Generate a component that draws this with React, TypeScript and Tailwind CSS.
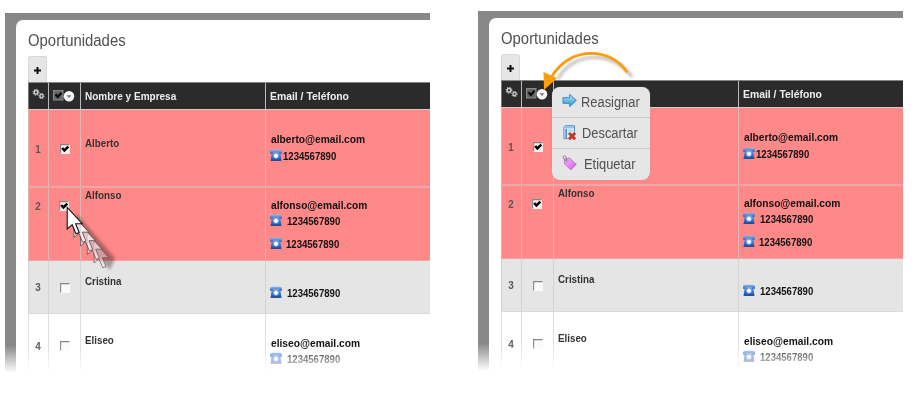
import type { ReactNode } from "react";

function PhoneIcon() {
  return (
    <svg viewBox="0 0 12 12" className="mb-[2px] h-3 w-3 shrink-0">
      <defs>
        <linearGradient id="phoneBody" x1="0" y1="0" x2="0" y2="1">
          <stop offset="0" stopColor="#6d9fe2" />
          <stop offset="1" stopColor="#1b4dad" />
        </linearGradient>
        <linearGradient id="phoneHandset" x1="0" y1="0" x2="0" y2="1">
          <stop offset="0" stopColor="#8db8ee" />
          <stop offset="1" stopColor="#2f68be" />
        </linearGradient>
      </defs>
      <path d="M1.6 3.4h8.8l1 8.3H.6z" fill="url(#phoneBody)" />
      <path d="M0 4.7V2.2Q.3.7 2.2.7h7.6Q11.7.7 12 2.2v2.5H9.2V3.5H2.8v1.2z" fill="url(#phoneHandset)" />
      <circle cx="6" cy="6.9" r="2.1" fill="#fff" />
      <circle cx="6" cy="6.9" r="2.5" fill="none" stroke="#a6c6ee" strokeWidth=".6" />
      <path d="M.7 11.3h10.6" stroke="#173f8e" strokeWidth=".8" />
    </svg>
  );
}

function Checkbox({ checked }: { checked?: boolean }) {
  return (
    <svg viewBox="0 0 10 10" className="h-[10px] w-[10px]">
      <rect width="10" height="10" fill={checked ? "#f4efec" : "#fafafa"} />
      <path d="M.6 9.5V.6h8.9" fill="none" stroke="#858585" strokeWidth="1.1" />
      {checked && <path d="M2.2 4 4.4 6.4 8.3 2.7" fill="none" stroke="#000" strokeWidth="2.5" />}
    </svg>
  );
}

function Gear({ x, y, s }: { x: number; y: number; s: number }) {
  return (
    <g transform={`translate(${x} ${y}) scale(${s})`}>
      <circle r="1.9" fill="none" stroke="#d0d0d0" strokeWidth="1.5" />
      <circle r="3" fill="none" stroke="#c4c4c4" strokeWidth="1.3" strokeDasharray="1.18 1.18" />
    </g>
  );
}

type Row = {
  name: string;
  row: string;
  cell: string;
  numPad: string;
  checkPad: string;
  namePad: string;
  contactPad: string;
  checked?: boolean;
  email?: string;
  phones: { pad: string; gap: string }[];
};

const rows: Row[] = [
  {
    name: "Alberto",
    row: "h-[78px] bg-[#ff8888] border-b-2 border-[#eca8a8]",
    cell: "border-l border-[#e2b4b4]",
    numPad: "pt-8",
    checkPad: "pt-[34px] pl-[11px]",
    namePad: "pt-[26px]",
    contactPad: "pt-[22px]",
    checked: true,
    email: "alberto@email.com",
    phones: [{ pad: "mt-[3px]", gap: "gap-[1px]" }],
  },
  {
    name: "Alfonso",
    row: "h-[73px] bg-[#ff8888] border-b border-[#efa3a3]",
    cell: "border-l border-[#e2b4b4]",
    numPad: "pt-[11px]",
    checkPad: "pt-[13px] pl-[10px]",
    namePad: "pt-0",
    contactPad: "pt-[10px]",
    checked: true,
    email: "alfonso@email.com",
    phones: [
      { pad: "mt-[2px]", gap: "gap-[5px]" },
      { pad: "mt-[9px]", gap: "gap-1" },
    ],
  },
  {
    name: "Cristina",
    row: "h-[53px] bg-[#e5e5e5] border-b border-[#dadada]",
    cell: "border-l border-[#d3d3d3]",
    numPad: "pt-[19px]",
    checkPad: "pt-[22px] pl-[11px]",
    namePad: "pt-[13px]",
    contactPad: "pt-[25px]",
    phones: [{ pad: "mt-0", gap: "gap-[5px]" }],
  },
  {
    name: "Eliseo",
    row: "h-[59px] bg-white",
    cell: "border-l border-[#dedede]",
    numPad: "pt-[25px]",
    checkPad: "pt-[27px] pl-[11px]",
    namePad: "pt-[19px]",
    contactPad: "pt-[22px]",
    email: "eliseo@email.com",
    phones: [{ pad: "mt-[2px]", gap: "gap-[5px]" }],
  },
];

const columns = "grid grid-cols-[20px_32px_185px_165px]";

function Panel({ children, menuOpen = false }: { children?: ReactNode; menuOpen?: boolean }) {
  return (
    <section className="relative h-[360px] w-[425px] shrink-0 overflow-hidden bg-[#878787] pt-[7px] pl-[11px]">
      <div className="h-[353px] rounded-tl-[7px] bg-white pl-3">
        <h1 className="h-[36px] origin-left scale-x-[0.93] pt-[11px] text-[16px] leading-5 text-[#505050]">Oportunidades</h1>
        <div className="flex h-[26px] w-[19px] items-center justify-center rounded-t-[3px] border border-b-0 border-[#d8d8d8] bg-[#e6e6e6] pt-[2px]">
          <svg viewBox="0 0 7 7" className="h-[7px] w-[7px]">
            <path d="M3.5 0v7M0 3.5h7" stroke="#111" strokeWidth="2" />
          </svg>
        </div>
        <div className={`${columns} h-7 border-y border-t-[#858585] border-b-[#d8c8c8] bg-[#2b2b2b] text-[11px] leading-[14px] font-bold text-[#eeeeee]`}>
          <div className="border-l border-[#777777] pt-[5px] pl-[3px]">
            <svg viewBox="0 0 13 12" className="h-3 w-[13px]">
              <Gear x={4} y={4.3} s={0.95} />
              <Gear x={9.5} y={8} s={0.85} />
            </svg>
          </div>
          <div className="flex items-start border-l border-[#bbbbbb] pt-[7px] pl-1">
            <svg viewBox="0 0 22 12" className="h-3 w-[22px] shrink-0">
              <rect x=".5" y=".5" width="9.5" height="9.5" fill="#666" stroke="#898989" />
              <path d="M2.5 4.2 4.8 7 8.5 2.8" fill="none" stroke="#080808" strokeWidth="2.3" />
              <circle cx="16" cy="6.2" r="5.3" fill="#f6f6f6" />
              <path d="M13.5 5.2h5L16 7.9z" fill="#777" />
            </svg>
          </div>
          <div className="border-l border-[#bbbbbb] pt-[6px] pl-1">
            {!menuOpen && <span className="inline-block origin-left scale-x-[0.91] whitespace-nowrap">Nombre y Empresa</span>}
          </div>
          <div className="border-l border-[#bbbbbb] pt-[6px] pl-1">
            <span className="inline-block origin-left scale-x-[0.945] whitespace-nowrap">Email / Teléfono</span>
          </div>
        </div>
        {rows.map((r, i) => (
          <div key={r.name} className={`${columns} ${r.row} text-[11px] leading-[14px] font-bold text-[#333333]`}>
            <div className={`${r.cell} ${r.numPad} text-center text-[#5c5555]`}>
              <span className="inline-block scale-x-[0.9]">{i + 1}</span>
            </div>
            <div className={`${r.cell} ${r.checkPad}`}>
              <Checkbox checked={r.checked} />
            </div>
            <div className={`${r.cell} ${r.namePad} pl-1`}>
              {!(menuOpen && i === 0) && <span className="inline-block origin-left scale-x-[0.89]">{r.name}</span>}
            </div>
            <div className={`${r.cell} ${r.contactPad} pl-1 text-[#111111]`}>
              {r.email && (
                <div className="ml-[1px] h-[14px] w-fit origin-left scale-x-[0.93]">{r.email}</div>
              )}
              {r.phones.map((p, k) => (
                <div key={k} className={`flex h-[14px] items-center ${p.pad} ${p.gap}`}>
                  <PhoneIcon />
                  <span className="origin-left scale-x-[0.87]">1234567890</span>
                </div>
              ))}
            </div>
          </div>
        ))}
      </div>
      <div className="absolute inset-x-0 bottom-0 h-[28px] bg-linear-to-b from-white/0 to-white" />
      {children}
    </section>
  );
}

const pointer = "M0 0V21.5L5 17.2 8.8 26.3 12 25 8.4 16.2H15z";

function CursorTrail() {
  return (
    <svg viewBox="0 0 56 72" className="absolute top-[191px] left-[59px] h-[72px] w-14">
      <defs>
        <filter id="soft" x="-30%" y="-30%" width="160%" height="160%">
          <feGaussianBlur stdDeviation="1.6" />
        </filter>
      </defs>
      <path d="M12 9 51 54 46 66 13 27z" fill="#402020" opacity=".4" filter="url(#soft)" />
      {[4, 3, 2, 1].map((n) => (
        <g key={n} transform={`translate(${3.2 + n * 6.7} ${3.5 + n * 8.5})`}>
          <path
            d={pointer}
            fill="#fff"
            fillOpacity={0.9 - n * 0.13}
            stroke="#5e5050"
            strokeOpacity={1 - n * 0.08}
            strokeWidth="1"
          />
        </g>
      ))}
      <path d={pointer} transform="translate(3.2 3.5)" fill="#fff" stroke="#151515" strokeWidth="1.1" />
    </svg>
  );
}

function SwoopArrow() {
  return (
    <svg viewBox="0 0 100 50" className="absolute top-[35px] left-[60px] h-[50px] w-[100px]">
      <defs>
        <filter id="arrowShadow" x="-20%" y="-20%" width="140%" height="140%">
          <feGaussianBlur stdDeviation="1.5" />
        </filter>
      </defs>
      <path d="M94 31C76 5 36 4 20 33" fill="none" stroke="#777" strokeWidth="3" opacity=".5" filter="url(#arrowShadow)" />
      <path d="M89.3 26.5C72 0 31 .5 13.5 31" fill="none" stroke="#ff9c0a" strokeWidth="2.8" />
      <path d="M5.5 26 19 32 6 44z" fill="#ff9c0a" />
    </svg>
  );
}

function ReassignIcon() {
  return (
    <svg viewBox="0 0 15 14" className="h-[14px] w-[15px] shrink-0">
      <defs>
        <linearGradient id="arrowBlue" x1="0" y1="0" x2="0" y2="1">
          <stop offset="0" stopColor="#bfe6fc" />
          <stop offset="1" stopColor="#2490dc" />
        </linearGradient>
      </defs>
      <path d="M1 3.7h6.7V.5L14.4 6.4 7.7 12.5V9.3H1z" fill="url(#arrowBlue)" stroke="#3285c4" strokeLinejoin="round" />
    </svg>
  );
}

function DiscardIcon() {
  return (
    <svg viewBox="0 0 14 16" className="h-4 w-[14px] shrink-0">
      <path d="M2.2.7h9.3v13H.9V2.3z" fill="#d5eafa" stroke="#5792c5" />
      <path d="M2.2 1.3h8.8v2H1.6z" fill="#8fc0ea" />
      <path d="M3.2 4v9" stroke="#4b8fd0" strokeWidth="1.6" />
      <path d="M5 5.5h5M5 8h2" stroke="#a4cbea" strokeWidth=".9" />
      <path d="m6 8 6.2 6.2M12.2 8 6 14.2" stroke="#f6ddd6" strokeWidth="4" />
      <path d="m6 8 6.2 6.2M12.2 8 6 14.2" stroke="#c5361c" strokeWidth="2.7" />
    </svg>
  );
}

function TagIcon() {
  return (
    <svg viewBox="0 0 15 16" className="h-4 w-[15px] shrink-0">
      <defs>
        <linearGradient id="tagPurple" x1="0" y1="0" x2="1" y2="1">
          <stop offset="0" stopColor="#f7b4fb" />
          <stop offset="1" stopColor="#cf5ee6" />
        </linearGradient>
      </defs>
      <path d="M2.2 4 7.6 3 14.3 9.4 8.8 14.8 2.6 9z" fill="url(#tagPurple)" stroke="#bf62d0" strokeWidth=".8" strokeLinejoin="round" />
      <circle cx="4.8" cy="5.8" r="1.1" fill="#fff" stroke="#8e3f9e" strokeWidth=".5" />
      <path d="M4.6 5.6C.4 4.5.4.8 2.5.8c1.4 0 2 1.8 2.1 4.8" fill="none" stroke="#8b7b8f" strokeWidth="1" />
    </svg>
  );
}

function ActionMenu() {
  const label = "origin-left scale-x-[0.92] text-[14px] leading-4";
  return (
    <ul className="absolute top-[76px] left-[74px] h-[93px] w-[98px] overflow-hidden rounded-[8px] bg-[#e6e6e6] text-[#505050] shadow-[0_0_1px_#999999]">
      <li className="flex h-[31px] items-center gap-[4px] border-b border-[#cbcbcb] pb-[3px] pl-[10px]">
        <ReassignIcon />
        <span className={`${label} mt-[3px]`}>Reasignar</span>
      </li>
      <li className="flex h-[31px] items-center gap-[5px] border-b border-[#cbcbcb] pl-[11px]">
        <DiscardIcon />
        <span className={label}>Descartar</span>
      </li>
      <li className="flex h-[31px] items-center gap-[7px] pb-[3px] pl-[10px]">
        <TagIcon />
        <span className={`${label} mt-[1px]`}>Etiquetar</span>
      </li>
    </ul>
  );
}

export default function App() {
  return (
    <main className="flex h-[400px] w-[916px] items-start gap-12 overflow-hidden bg-white pl-[5px] font-['Liberation_Sans',Arial,sans-serif]">
      <div className="pt-[13px]">
        <Panel>
          <CursorTrail />
        </Panel>
      </div>
      <div className="pt-[11px]">
        <Panel menuOpen>
          <SwoopArrow />
          <ActionMenu />
        </Panel>
      </div>
    </main>
  );
}
